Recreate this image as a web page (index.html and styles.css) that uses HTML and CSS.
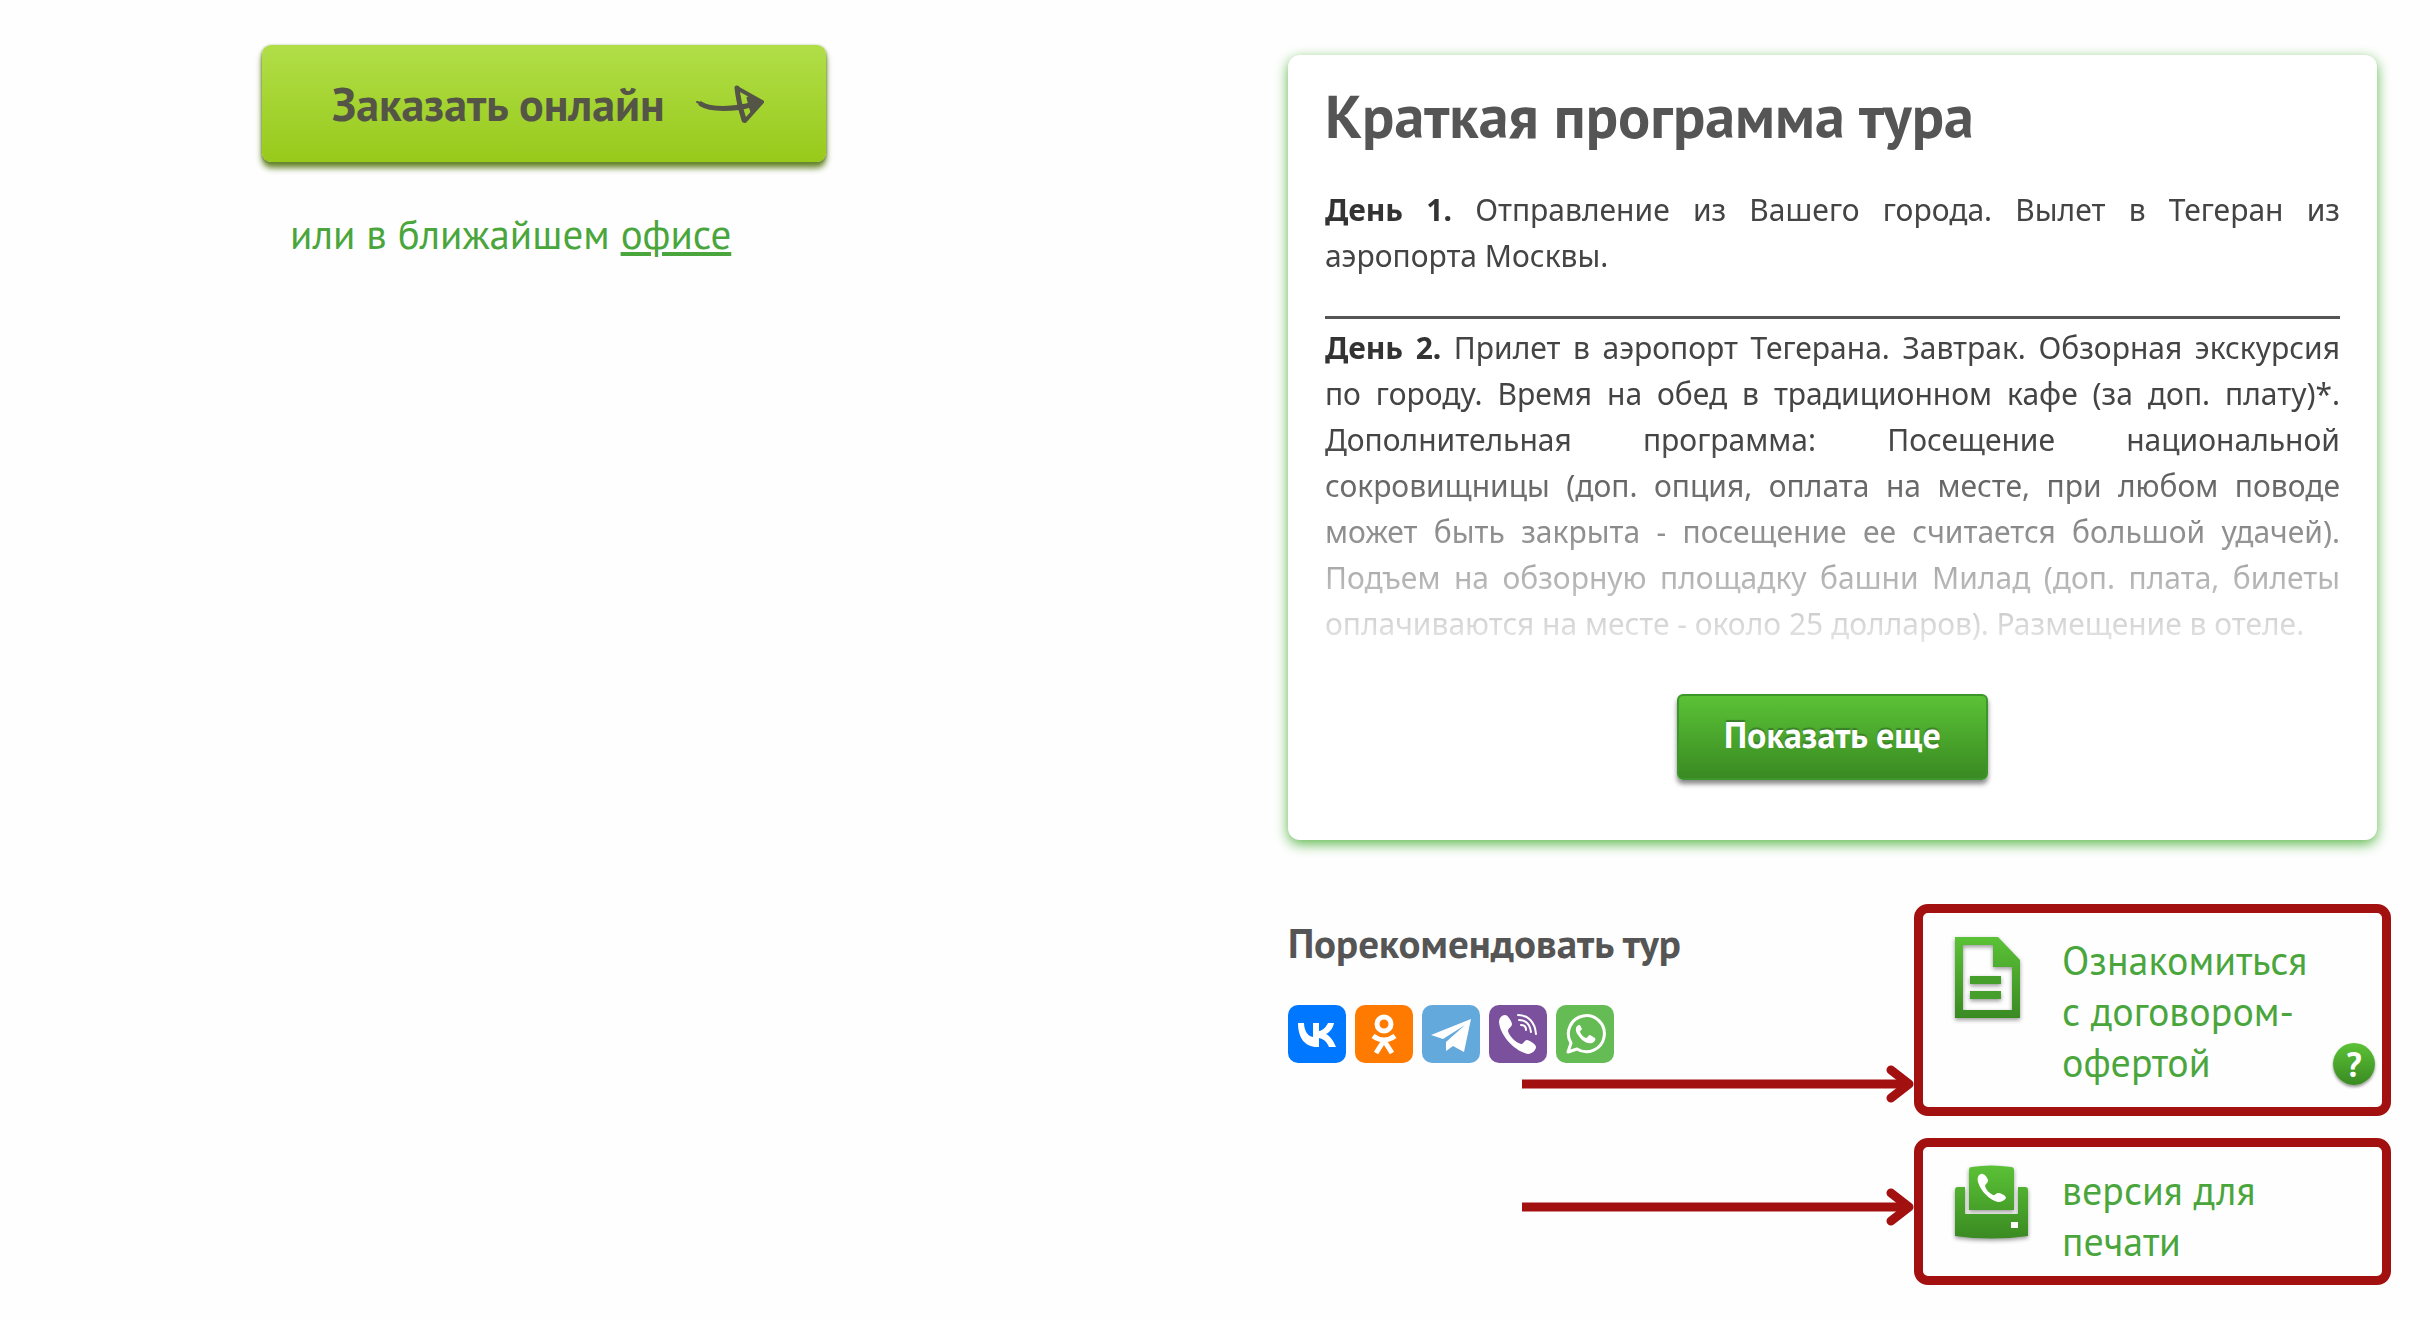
FILE: index.html
```html
<!DOCTYPE html>
<html lang="ru">
<head>
<meta charset="utf-8">
<title>Краткая программа тура</title>
<link rel="stylesheet" href="styles.css">
</head>
<body>
<main class="page">
  <section class="order">
    <button class="order-button" type="button">
      <span>Заказать онлайн</span>
      <svg class="order-arrow" width="70" height="40" viewBox="0 0 70 40" fill="none" stroke="#555547" stroke-linecap="round" stroke-linejoin="round" aria-hidden="true">
        <path d="M1 18L7 20" stroke-width="2"/>
        <path d="M5 20C14 26 38 26 58 20" stroke-width="5"/>
        <path d="M41 4L66 18L49 37L44 24Z" stroke-width="4"/>
        <path d="M41 4C42 14 45 26 48 36" stroke-width="5"/>
        <path d="M52 14L66 18L56 28L54 22Z" fill="#555547" stroke-width="3"/>
      </svg>
    </button>
    <p class="order-office">или в ближайшем <a href="#office">офисе</a></p>
  </section>

  <section class="tour">
    <article class="program">
      <h1 class="program-title">Краткая программа тура</h1>
      <div class="program-text">
        <p><b>День 1.</b> Отправление из Вашего города. Вылет в Тегеран из аэропорта Москвы.</p>
        <hr>
        <p><b>День 2.</b> Прилет в аэропорт Тегерана. Завтрак. Обзорная экскурсия по городу. Время на обед в традиционном кафе (за доп. плату)*. Дополнительная программа: Посещение национальной сокровищницы (доп. опция, оплата на месте, при любом поводе может быть закрыта - посещение ее считается большой удачей). Подъем на обзорную площадку башни Милад (доп. плата, билеты оплачиваются на месте - около 25 долларов). Размещение в отеле.</p>
      </div>
      <button class="more-button" type="button">Показать еще</button>
    </article>

    <div class="extras">
      <section class="share">
        <h2 class="share-title">Порекомендовать тур</h2>
        <div class="share-links">
          <a class="share-link vk" href="#vk" aria-label="ВКонтакте">
            <svg viewBox="0 0 58 58" aria-hidden="true"><path fill="#fff" d="M10 18h6c.4 9 4 13 9 14V18h6v8c4-.5 7-4 9-8h6c-1 5-4 9-8 11 4 2 7 6 10 13h-7c-2-5-5-8-10-9v9h-2C17 42 10 33 10 18Z"/></svg>
          </a>
          <a class="share-link ok" href="#ok" aria-label="Одноклассники">
            <svg viewBox="0 0 58 58" fill="none" stroke="#fff" stroke-linejoin="round" aria-hidden="true"><circle cx="29" cy="19" r="7" stroke-width="5"/><path stroke-width="5" d="M18 31c7 5 15 5 22 0M30 34L21 48M28 34L37 48"/></svg>
          </a>
          <a class="share-link tg" href="#telegram" aria-label="Telegram">
            <svg viewBox="0 0 58 58" aria-hidden="true"><path fill="#fff" d="M49 14L9 30l12 4 22-14-19 17v9l7-5 11 6Z"/></svg>
          </a>
          <a class="share-link viber" href="#viber" aria-label="Viber">
            <svg viewBox="0 0 58 58" aria-hidden="true"><path fill="#fff" d="M16 10c-3 0-6 3-6 7 1 13 15 29 29 32 4 0 8-4 8-7s-7-7-9-7c-3 0-3 4-6 4-5-1-12-8-13-13 0-3 4-4 4-7 0-2-4-9-7-9Z"/><path fill="none" stroke="#fff" stroke-width="2" stroke-linecap="round" d="M29 10c10 0 17 7 18 19M30 15c7 0 11 5 12 12M32 20c3 0 5 2 5 5"/></svg>
          </a>
          <a class="share-link wa" href="#whatsapp" aria-label="WhatsApp">
            <svg viewBox="0 0 58 58" aria-hidden="true"><path fill="none" stroke="#fff" stroke-width="3" stroke-linejoin="round" d="M12 47l3-9a18 18 0 1 1 6 6Z"/><path fill="#fff" d="M23 20c-4 1-4 6-1 10 4 6 9 9 14 8 3-1 4-4 3-5l-5-3c-2 0-2 3-4 3-3-1-5-4-6-6 0-2 2-2 2-3l-2-4Z"/></svg>
          </a>
        </div>
      </section>

      <nav class="actions">
        <div class="action action-offer">
          <svg class="pointer" viewBox="0 0 392 46" aria-hidden="true"><path d="M0 23H386" /><path class="pointer-head" d="M369 9L387 23L369 37"/></svg>
          <svg class="action-icon" width="76" height="86" viewBox="0 0 76 86" aria-hidden="true">
            <defs><linearGradient id="leaf" x1="0" y1="0" x2="0" y2="1"><stop offset="0" stop-color="#5bc236"/><stop offset="1" stop-color="#3a8a22"/></linearGradient></defs>
            <path fill="url(#leaf)" fill-rule="evenodd" d="M0 2H43L65 25V83H0ZM8 10V75H57V32H38V10Z"/>
            <path fill="#469f2a" d="M15 41H46V49H15ZM15 56H46V64H15Z"/>
          </svg>
          <a class="action-link" href="#offer">Ознакомиться<br>с договором-<br>офертой</a>
          <button class="help" type="button" aria-label="Справка">?</button>
        </div>
        <div class="action action-print">
          <svg class="pointer" viewBox="0 0 392 46" aria-hidden="true"><path d="M0 23H386"/><path class="pointer-head" d="M369 9L387 23L369 37"/></svg>
          <svg class="action-icon" width="76" height="86" viewBox="0 0 76 86" aria-hidden="true">
            <defs><linearGradient id="tray" x1="0" y1="0" x2="0" y2="74" gradientUnits="userSpaceOnUse"><stop offset="0" stop-color="#5bc236"/><stop offset="1" stop-color="#3a8a22"/></linearGradient></defs>
            <path fill="url(#tray)" d="M17 2Q36-1 56 2Q59 2 59 5V45H14V5Q14 2 17 2Z"/>
            <path fill="url(#tray)" d="M0 25Q0 22 3 22H10V49H63V22H70Q73 22 73 25V71Q36 76 0 71Z"/>
            <path fill="#fff" d="M26 9c-3 1-4 4-3 8 3 10 12 18 20 20 4 0 7-2 8-4 0-3-6-5-8-5s-3 3-5 2c-4-2-7-5-8-9 0-2 3-3 3-5 0-3-4-8-7-7ZM56 57H63V63H56Z"/>
          </svg>
          <a class="action-link" href="#print">версия для<br>печати</a>
        </div>
      </nav>
    </div>
  </section>
</main>
</body>
</html>
```
FILE: styles.css
```css
* {
  box-sizing: border-box;
}

body {
  margin: 0;
  background: #fefefe;
  color: #333;
  font-family: "Noto Sans", "Open Sans", sans-serif;
}

h1,
h2,
p {
  margin: 0;
}

button {
  border: 0;
  cursor: pointer;
}

.page {
  display: grid;
  grid-template-columns: 53fr 47fr;
  padding-top: 45px;
}

.order,
.program-title,
.more-button,
.order-button,
.share,
.actions,
.help {
  font-family: "PT Sans", "Roboto Condensed", "Noto Sans", sans-serif;
}

/* Order block */

.order {
  padding-left: 262px;
}

.order-button {
  display: flex;
  align-items: center;
  justify-content: space-between;
  width: 564px;
  height: 117px;
  padding: 0 60px 0 70px;
  border-radius: 9px;
  background: linear-gradient(#b1de48, #98ca1b);
  box-shadow: 0 6px 6px #67852a, 0 1px 3px #5d7a2a;
  color: #555547;
  font-size: 46px;
  font-weight: 700;
}

.order-office {
  margin-top: 46px;
  padding-left: 28px;
  color: #4aa63c;
  font-size: 41px;
  line-height: 52px;
}

.order-office a {
  color: inherit;
}

/* Tour programme card */

.tour {
  padding-right: 39px;
}

.program {
  margin: 10px 14px 0 0;
  padding: 25px 37px 60px 37px;
  border-radius: 12px;
  background: #fff;
  box-shadow: 0 4px 13px #5cb84c;
}

.program-title {
  color: #555;
  font-size: 60px;
  line-height: 72px;
}

.program-text {
  margin-top: 35px;
  padding-bottom: 47px;
  color: #444;
  font-size: 30px;
  line-height: 46px;
  text-align: justify;
  -webkit-mask-image: linear-gradient(#000 50%, transparent 96%);
  mask-image: linear-gradient(#000 50%, transparent 96%);
}

.program-text b {
  color: #333;
}

.program-text hr {
  height: 3px;
  margin: 37px 0 6px;
  border: 0;
  background: #555;
}

.more-button {
  display: block;
  width: 311px;
  height: 86px;
  margin: 0 auto;
  padding: 0 0 6px;
  border: 2px solid #3d962b;
  border-radius: 6px;
  background: linear-gradient(#5bc236, #398a22);
  box-shadow: 0 4px 5px #888;
  color: #fff;
  font-size: 36px;
  font-weight: 700;
  text-shadow: 0 -2px 1px #397f2a;
}

/* Sharing and document links */

.extras {
  display: flex;
  justify-content: space-between;
  margin-top: 64px;
}

.share {
  padding-top: 13px;
}

.share-title {
  color: #555;
  font-size: 41px;
  line-height: 52px;
}

.share-links {
  display: flex;
  gap: 9px;
  margin-top: 36px;
}

.share-link {
  width: 58px;
  height: 58px;
  border-radius: 10px;
}

.share-link svg {
  display: block;
}

.vk { background: #07f; }
.ok { background: #ff7a00; }
.tg { background: #64a9dc; }
.viber { background: #7b519d; }
.wa { background: #65bc54; }

.actions {
  display: flex;
  flex-direction: column;
  gap: 22px;
  width: 477px;
}

.action {
  position: relative;
  display: flex;
  gap: 31px;
  border: 9px solid #a31010;
  border-radius: 14px;
}

.action-offer {
  padding: 22px 32px 19px;
}

.action-print {
  padding: 18px 32px 9px;
}

.action-icon {
  flex: none;
  filter: drop-shadow(0 2px 2px #999);
}

.action-link {
  color: #4aa63c;
  font-size: 40px;
  line-height: 51px;
  text-decoration: none;
}

.help {
  position: absolute;
  right: 7px;
  bottom: 22px;
  width: 42px;
  height: 42px;
  padding: 0;
  border-radius: 50%;
  background: linear-gradient(#5bc236, #3a8a22);
  box-shadow: 0 2px 3px #999;
  color: #fff;
  font-size: 34px;
  font-weight: 700;
  line-height: 42px;
}

/* Callout arrows that lead to the document links */

.pointer {
  position: absolute;
  right: calc(100% + 9px);
  width: 392px;
  height: 46px;
  fill: none;
  stroke: #a31010;
  stroke-width: 9px;
}

.action-offer .pointer {
  top: 148px;
}

.action-print .pointer {
  top: 37px;
}

.pointer-head {
  stroke-linecap: round;
  stroke-linejoin: round;
}
```
